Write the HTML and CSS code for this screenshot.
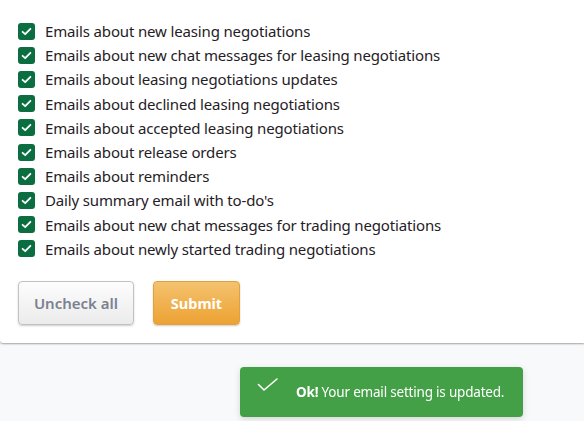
FILE: index.html
```html
<!DOCTYPE html>
<html>
<head>
<meta charset="utf-8">
<link rel="stylesheet" href="styles.css">
</head>
<body>
<div class="card">
  <ul class="options">
    <li class="option"><span class="box"><svg viewBox="0 0 17 17" width="17" height="17"><path d="M4.6 8.8 L7.2 11.2 L12.4 5.8" fill="none" stroke="#fff" stroke-width="1.8" stroke-linecap="round" stroke-linejoin="round"/></svg></span><span class="label">Emails about new leasing negotiations</span></li>
    <li class="option"><span class="box"><svg viewBox="0 0 17 17" width="17" height="17"><path d="M4.6 8.8 L7.2 11.2 L12.4 5.8" fill="none" stroke="#fff" stroke-width="1.8" stroke-linecap="round" stroke-linejoin="round"/></svg></span><span class="label">Emails about new chat messages for leasing negotiations</span></li>
    <li class="option"><span class="box"><svg viewBox="0 0 17 17" width="17" height="17"><path d="M4.6 8.8 L7.2 11.2 L12.4 5.8" fill="none" stroke="#fff" stroke-width="1.8" stroke-linecap="round" stroke-linejoin="round"/></svg></span><span class="label">Emails about leasing negotiations updates</span></li>
    <li class="option"><span class="box"><svg viewBox="0 0 17 17" width="17" height="17"><path d="M4.6 8.8 L7.2 11.2 L12.4 5.8" fill="none" stroke="#fff" stroke-width="1.8" stroke-linecap="round" stroke-linejoin="round"/></svg></span><span class="label">Emails about declined leasing negotiations</span></li>
    <li class="option"><span class="box"><svg viewBox="0 0 17 17" width="17" height="17"><path d="M4.6 8.8 L7.2 11.2 L12.4 5.8" fill="none" stroke="#fff" stroke-width="1.8" stroke-linecap="round" stroke-linejoin="round"/></svg></span><span class="label">Emails about accepted leasing negotiations</span></li>
    <li class="option"><span class="box"><svg viewBox="0 0 17 17" width="17" height="17"><path d="M4.6 8.8 L7.2 11.2 L12.4 5.8" fill="none" stroke="#fff" stroke-width="1.8" stroke-linecap="round" stroke-linejoin="round"/></svg></span><span class="label">Emails about release orders</span></li>
    <li class="option"><span class="box"><svg viewBox="0 0 17 17" width="17" height="17"><path d="M4.6 8.8 L7.2 11.2 L12.4 5.8" fill="none" stroke="#fff" stroke-width="1.8" stroke-linecap="round" stroke-linejoin="round"/></svg></span><span class="label">Emails about reminders</span></li>
    <li class="option"><span class="box"><svg viewBox="0 0 17 17" width="17" height="17"><path d="M4.6 8.8 L7.2 11.2 L12.4 5.8" fill="none" stroke="#fff" stroke-width="1.8" stroke-linecap="round" stroke-linejoin="round"/></svg></span><span class="label">Daily summary email with to-do's</span></li>
    <li class="option"><span class="box"><svg viewBox="0 0 17 17" width="17" height="17"><path d="M4.6 8.8 L7.2 11.2 L12.4 5.8" fill="none" stroke="#fff" stroke-width="1.8" stroke-linecap="round" stroke-linejoin="round"/></svg></span><span class="label">Emails about new chat messages for trading negotiations</span></li>
    <li class="option"><span class="box"><svg viewBox="0 0 17 17" width="17" height="17"><path d="M4.6 8.8 L7.2 11.2 L12.4 5.8" fill="none" stroke="#fff" stroke-width="1.8" stroke-linecap="round" stroke-linejoin="round"/></svg></span><span class="label">Emails about newly started trading negotiations</span></li>
  </ul>
  <div class="actions">
    <button class="btn btn-default">Uncheck all</button>
    <button class="btn btn-primary">Submit</button>
  </div>
</div>
<div class="toast">
  <svg class="toast-icon" viewBox="0 0 22 14" width="22" height="14"><path d="M1.5 6.5 L7 12 L20 1" fill="none" stroke="#fff" stroke-width="1.6" stroke-linecap="round" stroke-linejoin="round"/></svg>
  <span class="toast-text"><b>Ok!</b> Your email setting is updated.</span>
</div>
</body>
</html>
```
FILE: styles.css
```css
html, body {
  margin: 0;
  padding: 0;
}
body {
  background: #f8f9fb;
  font-family: "Noto Sans", "Open Sans", sans-serif;
  color: #1f2126;
  width: 584px;
  height: 421px;
  overflow: hidden;
}
.card {
  background: #fff;
  padding: 19px 18px 18px;
  border-bottom-left-radius: 3px;
  box-shadow: 0 1px 2px rgba(0,0,0,0.35);
}
.options {
  list-style: none;
  margin: 0;
  padding: 0;
}
.option {
  height: 24.2px;
  display: flex;
  align-items: center;
}
.box {
  width: 17px;
  height: 17px;
  border-radius: 3px;
  background: #0b6e40;
  display: flex;
  flex: none;
}
.label {
  margin-left: 10px;
  font-size: 15px;
  letter-spacing: -0.15px;
}
.actions {
  display: flex;
  gap: 19px;
  margin-top: 20px;
}
.btn {
  height: 44px;
  border-radius: 4px;
  font-family: "Noto Sans", "Open Sans", sans-serif;
  font-weight: bold;
  font-size: 14.5px;
  padding: 0;
  box-shadow: 0 1px 2px rgba(0,0,0,0.2);
}
.btn-default {
  width: 116px;
  background: linear-gradient(#fdfdfd, #ebebeb);
  border: 1px solid #bfc2c6;
  color: #7a8190;
  font-weight: 600;
  font-size: 15px;
}
.btn-primary {
  width: 87px;
  background: linear-gradient(#f4c26f, #eda232);
  border: 1px solid #e2a13c;
  color: #fff;
}
.toast {
  position: fixed;
  left: 240px;
  top: 367px;
  width: 283px;
  height: 50px;
  box-sizing: border-box;
  background: #43a047;
  border-radius: 4px;
  box-shadow: 0 2px 6px rgba(0,0,0,0.15);
  display: flex;
  align-items: flex-start;
  padding: 11px 0 0 17px;
  color: #fff;
}
.toast-icon {
  flex: none;
}
.toast-text {
  margin-left: 17px;
  margin-top: 5px;
  font-size: 13.5px;
  letter-spacing: -0.2px;
}
```
